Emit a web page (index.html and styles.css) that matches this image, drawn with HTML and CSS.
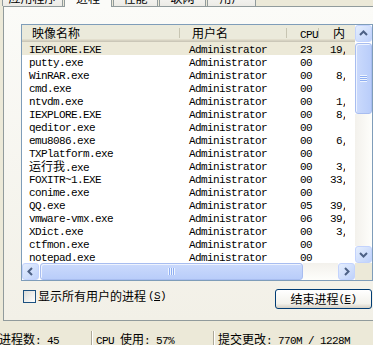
FILE: index.html
```html
<!DOCTYPE html>
<html lang="zh-CN">
    <head>
        <meta charset="UTF-8">
        <meta name="viewport" content="width=device-width, initial-scale=1.0">
        <title>Windows 任务管理器 - 进程</title>
        <link rel="stylesheet" href="styles.css">
    </head>
    <body>
        <div class="tabs">
            <div class="tab t1">应用程序</div>
            <div class="tab t2 active">进程</div>
            <div class="tab t3">性能</div>
            <div class="tab t4">联网</div>
            <div class="tab t5">用户</div>
        </div>

        <div class="panel">
            <div class="list">
                <div class="view">
                    <div class="head">
                        <div class="name">映像名称</div>
                        <div class="user">用户名</div>
                        <div class="cpu"><span class="m">CPU</span></div>
                        <div class="mem">内存使用</div>
                    </div>
                    <div class="row sel"><div class="name">IEXPLORE.EXE</div><div class="user">Administrator</div><div class="cpu">23</div><div class="mem"><span>19,</span></div></div>
                    <div class="row"><div class="name">putty.exe</div><div class="user">Administrator</div><div class="cpu">00</div><div class="mem"><span></span></div></div>
                    <div class="row"><div class="name">WinRAR.exe</div><div class="user">Administrator</div><div class="cpu">00</div><div class="mem"><span>8,</span></div></div>
                    <div class="row"><div class="name">cmd.exe</div><div class="user">Administrator</div><div class="cpu">00</div><div class="mem"><span></span></div></div>
                    <div class="row"><div class="name">ntvdm.exe</div><div class="user">Administrator</div><div class="cpu">00</div><div class="mem"><span>1,</span></div></div>
                    <div class="row"><div class="name">IEXPLORE.EXE</div><div class="user">Administrator</div><div class="cpu">00</div><div class="mem"><span>8,</span></div></div>
                    <div class="row"><div class="name">qeditor.exe</div><div class="user">Administrator</div><div class="cpu">00</div><div class="mem"><span></span></div></div>
                    <div class="row"><div class="name">emu8086.exe</div><div class="user">Administrator</div><div class="cpu">00</div><div class="mem"><span>6,</span></div></div>
                    <div class="row"><div class="name">TXPlatform.exe</div><div class="user">Administrator</div><div class="cpu">00</div><div class="mem"><span></span></div></div>
                    <div class="row"><div class="name"><span class="c">运行我</span>.exe</div><div class="user">Administrator</div><div class="cpu">00</div><div class="mem"><span>3,</span></div></div>
                    <div class="row"><div class="name">FOXITR~1.EXE</div><div class="user">Administrator</div><div class="cpu">00</div><div class="mem"><span>33,</span></div></div>
                    <div class="row"><div class="name">conime.exe</div><div class="user">Administrator</div><div class="cpu">00</div><div class="mem"><span></span></div></div>
                    <div class="row"><div class="name">QQ.exe</div><div class="user">Administrator</div><div class="cpu">05</div><div class="mem"><span>39,</span></div></div>
                    <div class="row"><div class="name">vmware-vmx.exe</div><div class="user">Administrator</div><div class="cpu">06</div><div class="mem"><span>39,</span></div></div>
                    <div class="row"><div class="name">XDict.exe</div><div class="user">Administrator</div><div class="cpu">00</div><div class="mem"><span>3,</span></div></div>
                    <div class="row"><div class="name">ctfmon.exe</div><div class="user">Administrator</div><div class="cpu">00</div><div class="mem"><span></span></div></div>
                    <div class="row"><div class="name">notepad.exe</div><div class="user">Administrator</div><div class="cpu">00</div><div class="mem"><span></span></div></div>
                </div>

                <!-- 竖向滚动条 -->
                <div class="vscroll">
                    <div class="sbtn"><svg viewBox="0 0 15 15"><polyline points="4,9 7.5,5.5 11,9"/></svg></div>
                    <div class="vthumb">
                        <svg class="grip" width="7" height="7" viewBox="0 0 7 7"><path class="hi" d="M0 0.5h7M0 2.5h7M0 4.5h7M0 6.5h7"/><path class="lo" d="M0 1.5h7M0 3.5h7M0 5.5h7"/></svg>
                    </div>
                    <div class="vtrack"></div>
                    <div class="sbtn"><svg viewBox="0 0 15 15"><polyline points="4,6 7.5,9.5 11,6"/></svg></div>
                </div>

                <!-- 横向滚动条 -->
                <div class="hscroll">
                    <div class="sbtn"><svg viewBox="0 0 15 15"><polyline points="9,4 5.5,7.5 9,11"/></svg></div>
                    <div class="hthumb">
                        <svg class="grip" width="7" height="7" viewBox="0 0 7 7"><path class="hi" d="M0.5 0v7M2.5 0v7M4.5 0v7M6.5 0v7"/><path class="lo" d="M1.5 0v7M3.5 0v7M5.5 0v7"/></svg>
                    </div>
                    <div class="htrack"></div>
                    <div class="sbtn"><svg viewBox="0 0 15 15"><polyline points="6,4 9.5,7.5 6,11"/></svg></div>
                </div>
                <div class="corner"></div>
            </div>

            <div class="controls">
                <label class="check"><span class="box"></span>显示所有用户的进程<span class="m">(<u>S</u>)</span></label>
                <div class="btn">结束进程<span class="m">(<u>E</u>)</span></div>
            </div>
        </div>

        <div class="status">
            <div class="cell s1">进程数<span class="m">: 45</span></div>
            <div class="cell s2"><span class="m">CPU </span>使用<span class="m">: 57%</span></div>
            <div class="cell s3">提交更改<span class="m">: 770M / 1228M</span></div>
        </div>
    </body>
</html>
```

FILE: styles.css
```css
body{
    margin: 0;
    width: 373px;
    height: 345px;
    overflow: hidden;
    background-color: #ece9d8;
    font-family: "Noto Sans CJK SC", sans-serif;
    font-size: 12px;
    color: #000;
}

/* 宋体那种等宽的英文 */
.m{
    font-family: "Liberation Mono", monospace;
    font-size: 11px;
    letter-spacing: -0.6px;
}

.c{
    font-family: "Noto Sans CJK SC", sans-serif;
    font-size: 12px;
    letter-spacing: 0;
    line-height: 13px;
}

/* 选项卡 */
.tabs{
    position: relative;
    z-index: 1;
    display: flex;
    align-items: flex-end;
    gap: 1px;
    height: 6px;
    padding-left: 2px;
}

.tab{
    flex: none;
    box-sizing: border-box;
    height: 20px;
    padding-top: 3px;
    border: 1px solid #919b9c;
    border-bottom: 0;
    border-radius: 3px 3px 0 0;
    background: linear-gradient(#fefefe, #ecebe6);
    text-align: center;
    line-height: 15px;
}

.tab.active{
    height: 21px;
    margin-bottom: -1px;
    background: #fbfbf8;
}

.t1{ width: 61px; }
.t2{ width: 48px; }
.t3{ width: 45px; }
.t4{ width: 47px; }
.t5{ width: 49px; }

.panel{
    box-sizing: border-box;
    height: 315px;
    margin: 0 -5px 0 3px;
    padding: 17px 0 0 17px;
    border: 1px solid #919b9c;
    background: linear-gradient(#fbfbf8, #f2f0e7);
}

/* 列表 */
.list{
    box-sizing: border-box;
    display: grid;
    grid-template-columns: 333px 17px;
    grid-template-rows: 238px 17px;
    width: 352px;
    height: 257px;
    border: 1px solid #7f9db9;
    background-color: #fff;
}

.view{
    overflow: hidden;
}

.head{
    display: flex;
    height: 17px;
    background: #ebeadb;
    box-shadow: inset 0 -1px #cbc7b8, inset 0 -2px #d6d2c2, inset 0 -3px #e2decd;
    line-height: 15px;
    white-space: nowrap;
}

.head > div{
    box-sizing: border-box;
    flex: none;
    overflow: hidden;
    background: linear-gradient(#c7c5b2, #c7c5b2) right 3px top 3px / 1px 10px no-repeat;
}

.head .name{ width: 161px; padding-left: 10px; }
.head .user{ width: 107px; padding-left: 9px; }
.head .cpu{ width: 32px; padding-left: 10px; }
.head .mem{ width: 23px; padding-left: 11px; background: none; }

.row{
    display: flex;
    height: 13px;
    font-family: "Liberation Mono", monospace;
    font-size: 11px;
    letter-spacing: -0.6px;
    line-height: 16px;
    white-space: nowrap;
}

.row.sel{
    background-color: #ece9d8;
}

.row > div{
    box-sizing: border-box;
    flex: none;
}

.row .name{ width: 161px; padding-left: 7px; }
.row .user{ width: 107px; padding-left: 6px; }
.row .cpu{ width: 32px; padding-left: 10px; }
.row .mem{ width: 23px; overflow: hidden; }

.row .mem span{
    display: block;
    width: 26px;
    text-align: right;
}

/* 滚动条 */
.vscroll{
    display: flex;
    flex-direction: column;
}

.hscroll{
    display: flex;
}

.sbtn{
    flex: none;
    box-sizing: border-box;
    width: 17px;
    height: 17px;
    border: 1px solid #c3d3fd;
    border-radius: 3px;
    background: linear-gradient(135deg, #e5eefd, #bfd2fb);
}

.sbtn svg{
    display: block;
    width: 15px;
    height: 15px;
}

.sbtn polyline{
    fill: none;
    stroke: #4d6185;
    stroke-width: 2;
}

.vthumb,
.hthumb{
    flex: none;
    box-sizing: border-box;
    display: flex;
    align-items: center;
    justify-content: center;
    border: 1px solid #a8bdf0;
    border-radius: 3px;
    box-shadow: inset 1px 1px #eef3fe;
}

.vthumb{
    height: 71px;
    margin-top: 1px;
    background: linear-gradient(90deg, #cbdafc, #b9cdfa);
}

.hthumb{
    width: 263px;
    margin-left: 1px;
    background: linear-gradient(#cbdafc, #b9cdfa);
}

.grip .hi{ stroke: #eef4fe; }
.grip .lo{ stroke: #8eaef2; }

.vtrack{
    flex: 1;
    background: linear-gradient(90deg, #f3f1ec, #fefefb);
}

.htrack{
    flex: 1;
    background: linear-gradient(#f3f1ec, #fefefb);
}

.corner{
    background-color: #ece9d8;
}

/* 下面的复选框和按钮 */
.controls{
    display: flex;
    align-items: flex-start;
    width: 349px;
    margin: 8px 0 0 2px;
}

.check{
    display: flex;
    align-items: center;
    gap: 2px;
    height: 14px;
    line-height: 14px;
}

.check .box{
    box-sizing: border-box;
    width: 13px;
    height: 13px;
    border: 1px solid #1c5180;
    background: linear-gradient(135deg, #dcdcd7, #fff);
}

.btn{
    box-sizing: border-box;
    display: flex;
    align-items: center;
    justify-content: center;
    width: 97px;
    height: 20px;
    margin-left: auto;
    border: 1px solid #003c74;
    border-radius: 3px;
    background: linear-gradient(#fff, #f3f2ec 75%, #d6d0c5);
    line-height: 14px;
}

/* 状态栏 */
.status{
    display: flex;
    padding-top: 10px;
    line-height: 15px;
    white-space: nowrap;
}

.cell{
    box-sizing: border-box;
    flex: none;
}

.s1{
    width: 92px;
    margin-left: -1px;
}

.s2{
    width: 122px;
    padding-left: 4px;
    border-left: 1px solid #aca899;
    box-shadow: inset 1px 0 #fff;
}

.s3{
    padding-left: 4px;
    border-left: 1px solid #aca899;
    box-shadow: inset 1px 0 #fff;
}
```
